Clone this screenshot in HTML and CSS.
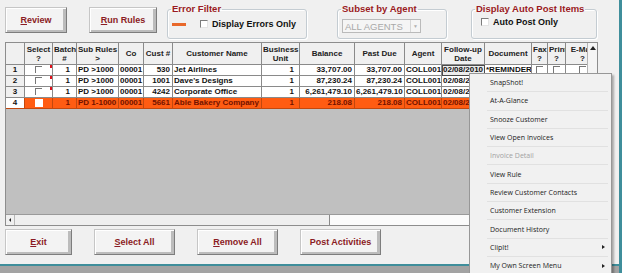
FILE: index.html
```html
<!DOCTYPE html>
<html lang="en">

<head>
    <meta charset="UTF-8">
    <meta name="viewport" content="width=device-width, initial-scale=1.0">
    <title>Auto Post Review</title>
    <link rel="stylesheet" href="styles.css">
</head>

<body>

    <div class="window">
        <div class="toolbar">
            <button class="btn btn-review"><u>R</u>eview</button>
            <button class="btn btn-rules"><u>R</u>un Rules</button>

            <fieldset class="group group-error">
                <legend>Error Filter</legend>
                <div class="group-body">
                    <span class="error-dash"></span>
                    <label class="check"><span class="box"></span>Display Errors Only</label>
                </div>
            </fieldset>

            <fieldset class="group group-agent">
                <legend>Subset by Agent</legend>
                <div class="group-body">
                    <div class="combo"><span>ALL AGENTS</span><span class="combo-btn">&#9660;</span></div>
                </div>
            </fieldset>

            <fieldset class="group group-auto">
                <legend>Display Auto Post Items</legend>
                <div class="group-body">
                    <label class="check"><span class="box"></span>Auto Post Only</label>
                </div>
            </fieldset>
        </div>

        <div class="grid">
            <div class="grid-view">
                <table class="rows">
                    <colgroup>
                        <col style="width: 19px">
                        <col style="width: 28px">
                        <col style="width: 24px">
                        <col style="width: 42px">
                        <col style="width: 25px">
                        <col style="width: 29px">
                        <col style="width: 89px">
                        <col style="width: 38px">
                        <col style="width: 55px">
                        <col style="width: 50px">
                        <col style="width: 37px">
                        <col style="width: 43px">
                        <col style="width: 47px">
                        <col style="width: 16px">
                        <col style="width: 18px">
                        <col style="width: 34px">
                    </colgroup>
                    <thead>
                        <tr>
                            <th></th>
                            <th>Select<br>?</th>
                            <th>Batch<br>#</th>
                            <th>Sub Rules<br>&gt;</th>
                            <th>Co</th>
                            <th>Cust #</th>
                            <th>Customer Name</th>
                            <th>Business<br>Unit</th>
                            <th>Balance</th>
                            <th>Past Due</th>
                            <th>Agent</th>
                            <th>Follow-up<br>Date</th>
                            <th>Document</th>
                            <th>Fax<br>?</th>
                            <th>Print<br>?</th>
                            <th>E-Mail<br>?</th>
                        </tr>
                    </thead>
                    <tbody>
                        <tr>
                            <td class="num">1</td>
                            <td class="sel"><span class="cb"></span><span class="flag"></span></td>
                            <td class="r batch">1</td>
                            <td>PD &gt;1000</td>
                            <td>00001</td>
                            <td class="r">530</td>
                            <td>Jet Airlines</td>
                            <td class="r bu">1</td>
                            <td class="r">33,707.00</td>
                            <td class="r">33,707.00</td>
                            <td>COLL001</td>
                            <td class="focus">02/08/2010</td>
                            <td>*REMINDER</td>
                            <td class="c"><span class="cb"></span></td>
                            <td class="c"><span class="cb"></span></td>
                            <td class="c"><span class="cb"></span></td>
                        </tr>
                        <tr>
                            <td class="num">2</td>
                            <td class="sel"><span class="cb"></span><span class="flag"></span></td>
                            <td class="r batch">1</td>
                            <td>PD &gt;1000</td>
                            <td>00001</td>
                            <td class="r">1001</td>
                            <td>Dave's Designs</td>
                            <td class="r bu">1</td>
                            <td class="r">87,230.24</td>
                            <td class="r">87,230.24</td>
                            <td>COLL001</td>
                            <td>02/08/2010</td>
                            <td>*REMINDER</td>
                            <td class="c"><span class="cb"></span></td>
                            <td class="c"><span class="cb"></span></td>
                            <td class="c"><span class="cb"></span></td>
                        </tr>
                        <tr>
                            <td class="num">3</td>
                            <td class="sel"><span class="cb"></span><span class="flag"></span></td>
                            <td class="r batch">1</td>
                            <td>PD &gt;1000</td>
                            <td>00001</td>
                            <td class="r">4242</td>
                            <td>Corporate Office</td>
                            <td class="r bu">1</td>
                            <td class="r">6,261,479.10</td>
                            <td class="r">6,261,479.10</td>
                            <td>COLL001</td>
                            <td>02/08/2010</td>
                            <td>*REMINDER</td>
                            <td class="c"><span class="cb"></span></td>
                            <td class="c"><span class="cb"></span></td>
                            <td class="c"><span class="cb"></span></td>
                        </tr>
                        <tr class="hot">
                            <td class="num">4</td>
                            <td class="sel"><span class="cb"></span></td>
                            <td class="r batch">1</td>
                            <td>PD 1-1000</td>
                            <td>00001</td>
                            <td class="r">5661</td>
                            <td>Able Bakery Company</td>
                            <td class="r bu">1</td>
                            <td class="r">218.08</td>
                            <td class="r">218.08</td>
                            <td>COLL001</td>
                            <td>02/08/2010</td>
                            <td>*REMINDER</td>
                            <td class="c"></td>
                            <td class="c"></td>
                            <td class="c"></td>
                        </tr>
                    </tbody>
                </table>
            </div>
            <div class="vscroll"><span class="arrow-up"></span></div>
            <div class="hscroll"><span class="arrow-left"></span><span class="thumb"></span></div>
            <div class="corner"></div>
        </div>

        <div class="actions">
            <button class="btn btn-exit"><u>E</u>xit</button>
            <button class="btn btn-wide"><u>S</u>elect All</button>
            <button class="btn btn-wide"><u>R</u>emove All</button>
            <button class="btn btn-wide">Post Activities</button>
        </div>

        <div class="statusbar"></div>

        <!-- right-click menu on the grid -->
        <ul class="context-menu">
            <li>SnapShot!</li>
            <li>At-A-Glance</li>
            <li>Snooze Customer</li>
            <li>View Open Invoices</li>
            <li class="disabled">Invoice Detail</li>
            <li>View Rule</li>
            <li>Review Customer Contacts</li>
            <li>Customer Extension</li>
            <li>Document History</li>
            <li class="sub">ClipIt!</li>
            <li class="sub">My Own Screen Menu</li>
        </ul>
    </div>

</body>

</html>
```

FILE: styles.css
```css
* {
    box-sizing: border-box;
}

body {
    margin: 0;
    background-color: #f0f0f0;
    font-family: "Liberation Sans", Arial, sans-serif;
}

.window {
    position: relative;
    width: 622px;
    height: 273px;
    background-color: #f0f0f0;
    border-right: 3px solid #3f8e9b;
    overflow: hidden;
}

/* top strip */
.toolbar {
    display: flex;
    align-items: flex-start;
    height: 42px;
    padding-left: 5px;
}

.btn {
    height: 26px;
    padding: 0;
    font-family: "Liberation Sans", Arial, sans-serif;
    font-size: 9px;
    font-weight: bold;
    color: #8b1c24;
    background-color: #f3f3f3;
    border: 1px solid;
    border-color: #c6c6c6 #7d7d7d #7d7d7d #c6c6c6;
    box-shadow: inset 1px 1px 0 #fff, inset -3px -2px 0 #bcbcbc;
}

.btn-review {
    width: 62px;
    margin-top: 7px;
}

.btn-rules {
    width: 68px;
    margin-top: 7px;
    margin-left: 22px;
}

.group {
    margin: 3px 0 0;
    padding: 0;
    min-width: 0;
    height: 36px;
    border: 1px solid #c4ccd2;
    border-radius: 3px;
    box-shadow: inset 1px 1px 0 #fff, 1px 1px 0 #fff;
}

.group legend {
    margin-left: 3px;
    padding: 0 1px;
    font-size: 9.5px;
    font-weight: bold;
    line-height: 12px;
    color: #9a1a22;
}

.group-body {
    display: flex;
    align-items: center;
    height: 18px;
}

.group-error {
    width: 140px;
    margin-left: 10px;
}

.group-agent {
    width: 110px;
    margin-left: 30px;
}

.group-agent .group-body {
    align-items: flex-start;
    padding-top: 4px;
}

.group-auto {
    width: 126px;
    margin-left: 24px;
}

.group-auto .group-body {
    height: 14px;
}

.error-dash {
    width: 14px;
    height: 3px;
    margin-left: 4px;
    background-color: #e8682a;
}

.check {
    display: flex;
    align-items: center;
    font-size: 9px;
    font-weight: bold;
    color: #111;
}

.box {
    width: 8px;
    height: 8px;
    margin-right: 4px;
    background-color: #fff;
    border-top: 1px solid #7c7c7c;
    border-left: 1px solid #7c7c7c;
    border-right: 1px solid #e4e4e4;
    border-bottom: 1px solid #e4e4e4;
}

.group-error .box {
    margin-left: 14px;
}

.group-auto .box {
    margin-left: 9px;
}

.combo {
    display: flex;
    justify-content: space-between;
    align-items: center;
    width: 79px;
    height: 14px;
    margin-left: 4px;
    padding-left: 2px;
    font-size: 9.5px;
    color: #a9a9a9;
    background-color: #f5f5f5;
    border: 1px solid #bababa;
}

.combo-btn {
    width: 10px;
    height: 12px;
    font-size: 5px;
    line-height: 12px;
    text-align: center;
    color: #b0b0b0;
    border-left: 1px solid #d6d6d6;
}

/* grid */
.grid {
    display: grid;
    grid-template-columns: 1fr 10px;
    grid-template-rows: 1fr 11px;
    width: 593px;
    height: 184px;
    margin-left: 5px;
    background-color: #c0c0c0;
    border: 1px solid #8d8d8d;
}

.grid-view {
    overflow: hidden;
}

.rows {
    width: 594px;
    table-layout: fixed;
    border-collapse: separate;
    border-spacing: 0;
    font-size: 8px;
    font-weight: bold;
    color: #111;
}

.rows th,
.rows td {
    padding: 0 1px;
    white-space: nowrap;
    overflow: hidden;
    border-right: 1px solid #8a8a8a;
    border-bottom: 1px solid #8a8a8a;
}

.rows th {
    height: 22px;
    line-height: 9px;
    text-align: center;
    color: #222;
    background-color: #f0f0f0;
}

.rows td {
    height: 11px;
    line-height: 10px;
    background-color: #fff;
}

.rows td.num {
    text-align: center;
    background-color: #f0f0f0;
}

.rows .r {
    text-align: right;
    padding-right: 2px;
}

.rows .batch {
    padding-right: 6px;
}

.rows .bu {
    padding-right: 5px;
}

.rows .c,
.rows .sel {
    text-align: center;
}

.rows .sel {
    position: relative;
}

.flag {
    position: absolute;
    top: 0;
    right: 0;
    width: 2px;
    height: 3px;
    background-color: #e0101a;
}

.cb {
    display: inline-block;
    width: 7px;
    height: 7px;
    vertical-align: middle;
    background-color: #fff;
    border-top: 1px solid #777;
    border-left: 1px solid #777;
}

.rows td.focus {
    background-color: #ededed;
    outline: 1px solid #4a4a4a;
    outline-offset: -1px;
}

.hot td {
    color: #731300;
    background-color: #ff5c12;
    border-color: #c2480e;
}

.rows .hot td.num {
    color: #111;
    background-color: #fff;
}

.hot .cb {
    width: 8px;
    height: 8px;
    border: none;
}

.vscroll {
    display: flex;
    justify-content: center;
    padding-top: 3px;
    background-color: #f4f4f4;
    border-left: 1px solid #b4b4b4;
}

.arrow-up {
    width: 0;
    height: 0;
    border-left: 3px solid transparent;
    border-right: 3px solid transparent;
    border-bottom: 4px solid #222;
}

.hscroll {
    display: flex;
    background-color: #fbfbfb;
    border-top: 1px solid #9a9a9a;
}

.arrow-left {
    display: flex;
    align-items: center;
    justify-content: center;
    width: 9px;
    background-color: #f0f0f0;
    border-right: 1px solid #b8b8b8;
}

.arrow-left::before {
    content: "";
    border-top: 2px solid transparent;
    border-bottom: 2px solid transparent;
    border-right: 2px solid #222;
}

.thumb {
    width: 315px;
    background-color: #efefef;
    border-right: 1px solid #8a8a8a;
}

.corner {
    background-color: #f0f0f0;
}

/* bottom buttons */
.actions {
    display: flex;
    gap: 22px;
    margin-top: 3px;
    padding-left: 5px;
}

.btn-exit {
    width: 67px;
}

.btn-wide {
    width: 81px;
}

.statusbar {
    height: 9px;
    margin-top: 9px;
    background-color: #a3a3a3;
    border-top: 2px solid #3f8e9b;
}

/* context menu */
.context-menu {
    position: absolute;
    top: 73px;
    left: 469px;
    width: 143px;
    height: 215px;
    margin: 0;
    padding: 0;
    list-style: none;
    font-family: "Open Sans", "Liberation Sans", sans-serif;
    font-size: 7px;
    color: #1b1b1b;
    background-color: #f1f1f1;
    border: 1px solid #979797;
    box-shadow: 2px 2px 2px rgba(0, 0, 0, 0.3);
}

.context-menu li {
    display: flex;
    justify-content: space-between;
    align-items: center;
    height: 18.3px;
    margin: 0 3px 0 17px;
    padding-left: 3px;
    border-bottom: 1px solid #e1e1e1;
}

.context-menu li.disabled {
    color: #a2a2a2;
}

.context-menu li.sub::after {
    content: "";
    margin-right: 3px;
    border-top: 2.5px solid transparent;
    border-bottom: 2.5px solid transparent;
    border-left: 3px solid #222;
}
```
